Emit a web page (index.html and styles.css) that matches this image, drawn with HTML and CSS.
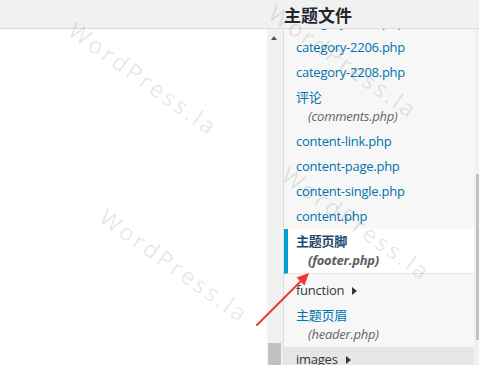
FILE: index.html
```html
<!DOCTYPE html>
<html lang="zh-CN">
<head>
<meta charset="utf-8">
<title>主题文件</title>
<link rel="stylesheet" href="styles.css">
</head>
<body>
<div class="page">
  <div class="topbar"><h2 class="title">主题文件</h2></div>
  <div class="main">
    <div class="editor"></div>
    <div class="vscroll">
      <span class="up-arrow"></span>
      <span class="vthumb"></span>
    </div>
    <div class="files">
      <ul class="tree">
        <li class="file"><a>category-2204.php</a></li>
        <li class="file"><a>category-2206.php</a></li>
        <li class="file"><a>category-2208.php</a></li>
        <li class="file"><a>评论<span class="desc">(comments.php)</span></a></li>
        <li class="file"><a>content-link.php</a></li>
        <li class="file"><a>content-page.php</a></li>
        <li class="file"><a>content-single.php</a></li>
        <li class="file"><a>content.php</a></li>
        <li class="file current"><a>主题页脚<span class="desc">(footer.php)</span></a></li>
        <li class="folder first-folder"><span class="folder-label">function<span class="caret"></span></span></li>
        <li class="file"><a>主题页眉<span class="desc">(header.php)</span></a></li>
        <li class="folder focused"><span class="folder-label">images<span class="caret"></span></span></li>
      </ul>
    </div>
    <div class="gutter"><span class="gthumb"></span></div>
  </div>

  <span class="wm wm1">WordPress.la</span>
  <span class="wm wm2">WordPress.la</span>
  <span class="wm wm3">WordPress.la</span>
  <span class="wm wm4">WordPress.la</span>

  <svg class="arrow" width="479" height="365" viewBox="0 0 479 365">
    <line x1="257" y1="325" x2="302" y2="280" stroke="#ee3a37" stroke-width="2" stroke-linecap="round"/>
    <polygon points="309,273 304.5,285.5 296.5,277.5" fill="#ee3a37"/>
  </svg>
</div>
</body>
</html>
```

FILE: styles.css
```css
* { box-sizing: border-box; }
html, body { margin: 0; padding: 0; }
body {
  background: #f1f1f1;
  font-family: "Open Sans", "Noto Sans CJK SC", sans-serif;
  width: 479px;
  height: 365px;
  overflow: hidden;
}
.page {
  position: relative;
  width: 479px;
  height: 365px;
  overflow: hidden;
}
.topbar {
  height: 29px;
  border-bottom: 1px solid #dcdcdc;
  padding-left: 284px;
  display: flex;
  align-items: center;
}
.title {
  margin: 0;
  font-family: "Noto Sans CJK SC", sans-serif;
  font-size: 17px;
  font-weight: 700;
  color: #23282d;
  line-height: 1;
}
.main {
  display: flex;
  height: 336px;
}
.editor {
  width: 267px;
  background: #fff;
}
.vscroll {
  width: 17px;
  background: #f1f1f1;
  border-right: 1px solid #dedede;
  display: flex;
  flex-direction: column;
  justify-content: space-between;
  align-items: flex-start;
  padding: 7px 0 0 1px;
}
.up-arrow {
  margin-left: 3px;
  width: 0;
  height: 0;
  border-left: 3.5px solid transparent;
  border-right: 3.5px solid transparent;
  border-bottom: 4px solid #505050;
}
.vthumb {
  width: 13px;
  height: 22px;
  background: #c1c1c1;
}
.files {
  width: 190px;
  background: #f7f7f7;
  overflow: hidden;
}
.tree {
  list-style: none;
  margin: -19px 0 0;
  padding: 0;
}
.tree li { margin: 0; padding: 0; }
.file a {
  display: block;
  padding: 3px 4px 3px 12px;
  font-size: 13px;
  line-height: 19px;
  letter-spacing: -0.25px;
  color: #0073aa;
  white-space: nowrap;
}
.desc {
  display: block;
  padding-left: 12px;
  font-style: italic;
  color: #666;
}
.current a {
  background: #fff;
  border-left: 4px solid #00a0d2;
  padding-left: 8px;
  font-weight: 700;
  color: #1d4a6a;
  border-bottom: 1px solid #e4e4e4;
}
.current .desc { color: #5e5e5e; font-weight: 700; }
.folder-label {
  display: flex;
  align-items: center;
  padding: 3px 4px 3px 12px;
  font-size: 13px;
  line-height: 19px;
  letter-spacing: -0.25px;
  color: #32373c;
}
.first-folder { margin-top: 4px !important; }
.focused .folder-label { background: #e6e6e6; }
.caret {
  margin-left: 8px;
  width: 0;
  height: 0;
  border-top: 4px solid transparent;
  border-bottom: 4px solid transparent;
  border-left: 5px solid #32373c;
}
.gutter {
  width: 5px;
  padding-top: 145px;
  display: flex;
  justify-content: flex-end;
}
.gthumb {
  width: 3px;
  height: 166px;
  background: #c1c1c1;
}
.wm {
  position: absolute;
  font-family: "Open Sans", sans-serif;
  font-size: 23px;
  line-height: 1;
  letter-spacing: 3px;
  color: rgba(0, 0, 0, 0.11);
  transform: rotate(35.5deg);
  transform-origin: 0 0;
  white-space: nowrap;
  pointer-events: none;
}
.wm1 { left: 78px; top: 18px; }
.wm2 { left: 278px; top: 1px; }
.wm3 { left: 109px; top: 205px; }
.wm4 { left: 291px; top: 163px; }
.arrow {
  position: absolute;
  left: 0;
  top: 0;
  pointer-events: none;
}
```
